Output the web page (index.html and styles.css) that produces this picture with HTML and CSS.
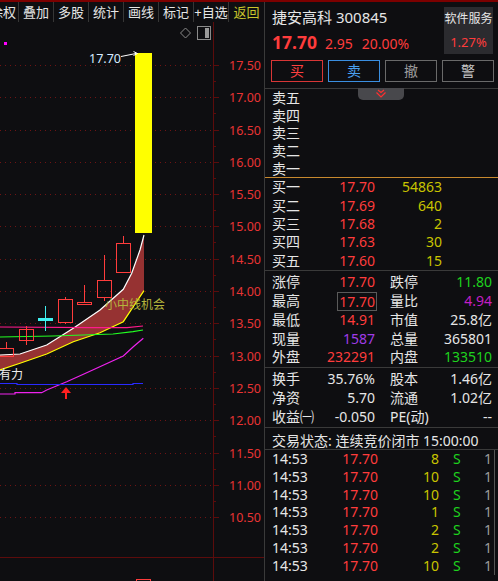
FILE: index.html
```html
<!DOCTYPE html>
<html lang="zh-CN">
<head>
<meta charset="utf-8">
<title>捷安高科 300845</title>
<link rel="stylesheet" href="styles.css">
</head>
<body>
<div class="topline"></div>
<div class="main">
  <div class="left">
    <div class="toolbar">
      <div class="tb first">除权</div>
      <div class="tb">叠加</div>
      <div class="tb">多股</div>
      <div class="tb">统计</div>
      <div class="tb">画线</div>
      <div class="tb">标记</div>
      <div class="tb">+自选</div>
      <div class="tb back">返回</div>
    </div>
    <svg class="chart" viewBox="0 22 264 559" width="264" height="559" xmlns="http://www.w3.org/2000/svg">
      <g class="grid">
        <line x1="0" y1="65.5" x2="213" y2="65.5"/>
        <line x1="0" y1="97.5" x2="213" y2="97.5"/>
        <line x1="0" y1="130.5" x2="213" y2="130.5"/>
        <line x1="0" y1="162.5" x2="213" y2="162.5"/>
        <line x1="0" y1="194.5" x2="213" y2="194.5"/>
        <line x1="0" y1="226.5" x2="213" y2="226.5"/>
        <line x1="0" y1="259.5" x2="213" y2="259.5"/>
        <line x1="0" y1="291.5" x2="213" y2="291.5"/>
        <line x1="0" y1="323.5" x2="213" y2="323.5"/>
        <line x1="0" y1="356.5" x2="213" y2="356.5"/>
        <line x1="0" y1="388.5" x2="213" y2="388.5"/>
        <line x1="0" y1="420.5" x2="213" y2="420.5"/>
        <line x1="0" y1="453.5" x2="213" y2="453.5"/>
        <line x1="0" y1="485.5" x2="213" y2="485.5"/>
        <line x1="0" y1="517.5" x2="213" y2="517.5"/>
      </g>
      <g class="axis">
        <line x1="213.5" y1="22" x2="213.5" y2="581"/>
        <line x1="0" y1="557.5" x2="264" y2="557.5"/>
        <line x1="213" y1="65.5" x2="219" y2="65.5"/>
        <line x1="213" y1="97.5" x2="219" y2="97.5"/>
        <line x1="213" y1="130.5" x2="219" y2="130.5"/>
        <line x1="213" y1="162.5" x2="219" y2="162.5"/>
        <line x1="213" y1="194.5" x2="219" y2="194.5"/>
        <line x1="213" y1="226.5" x2="219" y2="226.5"/>
        <line x1="213" y1="259.5" x2="219" y2="259.5"/>
        <line x1="213" y1="291.5" x2="219" y2="291.5"/>
        <line x1="213" y1="323.5" x2="219" y2="323.5"/>
        <line x1="213" y1="356.5" x2="219" y2="356.5"/>
        <line x1="213" y1="388.5" x2="219" y2="388.5"/>
        <line x1="213" y1="420.5" x2="219" y2="420.5"/>
        <line x1="213" y1="453.5" x2="219" y2="453.5"/>
        <line x1="213" y1="485.5" x2="219" y2="485.5"/>
        <line x1="213" y1="517.5" x2="219" y2="517.5"/>
        <line x1="213" y1="81.5" x2="216" y2="81.5"/>
        <line x1="213" y1="113.5" x2="216" y2="113.5"/>
        <line x1="213" y1="146.5" x2="216" y2="146.5"/>
        <line x1="213" y1="178.5" x2="216" y2="178.5"/>
        <line x1="213" y1="210.5" x2="216" y2="210.5"/>
        <line x1="213" y1="242.5" x2="216" y2="242.5"/>
        <line x1="213" y1="275.5" x2="216" y2="275.5"/>
        <line x1="213" y1="307.5" x2="216" y2="307.5"/>
        <line x1="213" y1="339.5" x2="216" y2="339.5"/>
        <line x1="213" y1="372.5" x2="216" y2="372.5"/>
        <line x1="213" y1="404.5" x2="216" y2="404.5"/>
        <line x1="213" y1="436.5" x2="216" y2="436.5"/>
        <line x1="213" y1="469.5" x2="216" y2="469.5"/>
        <line x1="213" y1="501.5" x2="216" y2="501.5"/>
      </g>
      <g class="ax">
        <text x="229" y="70">17.50</text>
        <text x="229" y="102">17.00</text>
        <text x="229" y="135">16.50</text>
        <text x="229" y="167">16.00</text>
        <text x="229" y="199">15.50</text>
        <text x="229" y="231">15.00</text>
        <text x="229" y="264">14.50</text>
        <text x="229" y="296">14.00</text>
        <text x="229" y="328">13.50</text>
        <text x="229" y="361">13.00</text>
        <text x="229" y="393">12.50</text>
        <text x="229" y="425">12.00</text>
        <text x="229" y="458">11.50</text>
        <text x="229" y="490">11.00</text>
        <text x="229" y="522">10.50</text>
      </g>
      <!-- top icons -->
      <polygon points="185.5,28 190.5,33 185.5,38 180.5,33" fill="none" stroke="#8a8a8a"/>
      <rect x="197.5" y="26.5" width="13" height="13" fill="none" stroke="#8a8a8a"/>
      <rect x="205" y="28" width="4" height="10" fill="#9a9a9a"/>
      <rect x="4" y="42" width="3" height="3" fill="#ff00ff"/>
      <!-- band -->
      <polygon class="band" points="0,355 20,354 46.7,345 73.3,328.3 100,310 123.3,289.3 131.7,273.3 140,250 144,235 144,290.7 133.3,306.7 123.3,321.7 100,332.7 73.3,341.7 46.7,354 20,363.3 0,370"/>
      <polyline class="ln" stroke="#ffffff" points="0,355 20,354 46.7,345 73.3,328.3 100,310 123.3,289.3 131.7,273.3 140,250 144,235"/>
      <polyline class="ln" stroke="#ffff00" points="0,370 20,363.3 46.7,354 73.3,341.7 100,332.7 123.3,321.7 133.3,306.7 144,290.7"/>
      <polyline class="ln" stroke="#ff1a8c" points="0,327 93,327.7 127,327.7 143,326"/>
      <polyline class="ln" stroke="#22ff22" points="0,337 53,336 113,334 133,331.7 143,330"/>
      <polyline class="ln" stroke="#ee22ee" points="0,394 15,394 15,392.7 41.7,392.7 46.7,390 66.7,381.7 86.7,372.7 123.3,356 133.3,346.7 143.3,338.3"/>
      <polyline class="ln" stroke="#2a2aff" points="0,383.5 17,383.5 17,384.5 133,384.5 133,383.5 143,383.5"/>
      <!-- candles -->
      <g class="cdl">
        <line x1="123.5" y1="236" x2="123.5" y2="243"/>
        <rect x="116.5" y="243.5" width="14" height="29"/>
        <line x1="104.5" y1="255" x2="104.5" y2="280"/>
        <line x1="104.5" y1="297" x2="104.5" y2="301"/>
        <rect x="97.5" y="280.5" width="14" height="17"/>
        <line x1="84.5" y1="285" x2="84.5" y2="302"/>
        <rect x="77.5" y="302.5" width="14" height="2"/>
        <line x1="65.5" y1="297" x2="65.5" y2="299"/>
        <line x1="65.5" y1="322" x2="65.5" y2="324"/>
        <rect x="58.5" y="299.5" width="14" height="23"/>
        <line x1="26.5" y1="326" x2="26.5" y2="345"/>
        <rect x="19.5" y="329.5" width="14" height="11"/>
        <line x1="6.5" y1="342" x2="6.5" y2="348"/>
        <rect x="-3.5" y="348.5" width="17" height="8"/>
        <rect x="136.5" y="579.5" width="14" height="6"/>
      </g>
      <line x1="45.5" y1="306" x2="45.5" y2="331" stroke="#40f0f0"/>
      <rect x="38" y="318" width="15" height="3" fill="#40f0f0"/>
      <rect x="135" y="53" width="17" height="180" fill="#ffff00"/>
      <polyline points="121,56.5 136,53.5" fill="none" stroke="#ffffff"/>
      <polyline points="133.5,51.5 137.5,53.5 133.5,55.5" fill="none" stroke="#ffffff"/>
      <text class="lbl" x="89" y="62.5">17.70</text>
      <text class="sig" x="105" y="308.5">小中线机会</text>
      <text class="wt" x="-1" y="378.5">有力</text>
      <polygon points="66,387 61,393 71,393" fill="#ff2020"/>
      <rect x="65" y="393" width="2" height="6" fill="#ff2020"/>
    </svg>
  </div>
  <div class="right">
    <div class="head">
      <div class="info">
        <div class="name">捷安高科 300845</div>
        <div class="quote"><span class="last">17.70</span><span class="chg">2.95</span><span class="pct">20.00%</span></div>
      </div>
      <div class="sector"><div class="sname">软件服务</div><div class="spct">1.27%</div></div>
    </div>
    <div class="btns">
      <div class="btn buy">买</div>
      <div class="btn sell">卖</div>
      <div class="btn cancel">撤</div>
      <div class="btn warn">警</div>
    </div>
    <div class="book asks">
      <div class="handle">
        <svg width="10" height="9" viewBox="0 0 10 9"><polyline points="2,1 5,3.5 8,1" fill="none" stroke="#ff3030" stroke-width="1.2"/><polyline points="0.5,3.5 5,8 9.5,3.5" fill="none" stroke="#ff3030" stroke-width="1.2"/></svg>
      </div>
      <div class="row"><span>卖五</span><span></span><span></span></div>
      <div class="row"><span>卖四</span><span></span><span></span></div>
      <div class="row"><span>卖三</span><span></span><span></span></div>
      <div class="row"><span>卖二</span><span></span><span></span></div>
      <div class="row"><span>卖一</span><span></span><span></span></div>
    </div>
    <div class="book bids">
      <div class="row"><span>买一</span><span class="v red">17.70</span><span class="v vol">54863</span></div>
      <div class="row"><span>买二</span><span class="v red">17.69</span><span class="v vol">640</span></div>
      <div class="row"><span>买三</span><span class="v red">17.68</span><span class="v vol">2</span></div>
      <div class="row"><span>买四</span><span class="v red">17.63</span><span class="v vol">30</span></div>
      <div class="row"><span>买五</span><span class="v red">17.60</span><span class="v vol">15</span></div>
    </div>
    <div class="stats">
      <div class="srow"><span>涨停</span><span class="v red">17.70</span><span class="l2">跌停</span><span class="v grn">11.80</span></div>
      <div class="srow"><span>最高</span><span class="v red"><span class="boxed">17.70</span></span><span class="l2">量比</span><span class="v pur">4.94</span></div>
      <div class="srow"><span>最低</span><span class="v red">14.91</span><span class="l2">市值</span><span class="v">25.8亿</span></div>
      <div class="srow"><span>现量</span><span class="v vio">1587</span><span class="l2">总量</span><span class="v">365801</span></div>
      <div class="srow"><span>外盘</span><span class="v red">232291</span><span class="l2">内盘</span><span class="v grn">133510</span></div>
    </div>
    <div class="stats2">
      <div class="srow"><span>换手</span><span class="v">35.76%</span><span class="l2">股本</span><span class="v">1.46亿</span></div>
      <div class="srow"><span>净资</span><span class="v">5.70</span><span class="l2">流通</span><span class="v">1.02亿</span></div>
      <div class="srow"><span>收益㈠</span><span class="v">-0.050</span><span class="l2">PE(动)</span><span class="v">--</span></div>
    </div>
    <div class="status">交易状态: 连续竞价闭市 15:00:00</div>
    <div class="ticks">
      <div class="trow"><span>14:53</span><span class="v red">17.70</span><span class="v vol">8</span><span></span><span class="grn">S</span><span class="v gray">1</span></div>
      <div class="trow"><span>14:53</span><span class="v red">17.70</span><span class="v vol">10</span><span></span><span class="grn">S</span><span class="v gray">1</span></div>
      <div class="trow"><span>14:53</span><span class="v red">17.70</span><span class="v vol">10</span><span></span><span class="grn">S</span><span class="v gray">1</span></div>
      <div class="trow"><span>14:53</span><span class="v red">17.70</span><span class="v vol">1</span><span></span><span class="grn">S</span><span class="v gray">1</span></div>
      <div class="trow"><span>14:53</span><span class="v red">17.70</span><span class="v vol">2</span><span></span><span class="grn">S</span><span class="v gray">1</span></div>
      <div class="trow"><span>14:53</span><span class="v red">17.70</span><span class="v vol">2</span><span></span><span class="grn">S</span><span class="v gray">1</span></div>
      <div class="trow"><span>14:53</span><span class="v red">17.70</span><span class="v vol">10</span><span></span><span class="grn">S</span><span class="v gray">1</span></div>
    </div>
  </div>
</div>
</body>
</html>
```

FILE: styles.css
```css
* { box-sizing: border-box; margin: 0; padding: 0; }
html, body { width: 498px; height: 581px; overflow: hidden; }
body {
  background: #0e0e11;
  color: #e6e6e6;
  font-family: "Noto Sans", "Noto Sans CJK SC", sans-serif;
  font-size: 14px;
}
.topline { height: 2px; background: #7c0000; }
.main { display: flex; height: 579px; }

/* left: toolbar + chart */
.left { width: 264px; flex: none; display: flex; flex-direction: column; overflow: hidden; }
.toolbar { height: 20px; flex: none; display: flex; margin-left: -16px; }
.tb {
  flex: none; width: 35px; border-right: 1px solid #363636;
  text-align: center; font-size: 13px; line-height: 20px; white-space: nowrap; color: #e6e6e6;
}
.tb.first { text-align: right; padding-right: 2px; }
.tb.back { color: #c9c42c; border-right: 0; }
.chart { display: block; flex: none; }
.grid line { stroke: #6e1414; stroke-dasharray: 1 4; }
.axis line { stroke: #5c0c0c; }
.ax { font-family: "Noto Sans", sans-serif; font-size: 12.5px; fill: #e83434; }
.band { fill: #963232; }
.ln { fill: none; stroke-width: 1.2; }
.cdl line, .cdl rect { stroke: #ff3c3c; fill: none; }
.lbl { font-family: "Noto Sans", sans-serif; font-size: 12.5px; fill: #d6eaff; }
.sig { font-family: "Noto Sans CJK SC", sans-serif; font-size: 12px; fill: #b4b43c; }
.wt { font-family: "Noto Sans CJK SC", sans-serif; font-size: 12px; fill: #eeeeee; }

/* right panel */
.right { flex: 1; border-left: 1px solid #3a3a3a; display: flex; flex-direction: column; }
.head { height: 58px; flex: none; display: flex; justify-content: space-between; padding: 5px 5px 0 7px; }
.name { font-size: 15px; line-height: 20px; white-space: nowrap; }
.quote { margin-top: 4px; line-height: 22px; color: #ff3c3c; display: flex; align-items: baseline; white-space: nowrap; }
.last { font-size: 17.5px; font-weight: bold; margin-right: 8px; }
.chg { font-size: 14px; margin-right: 9px; }
.pct { font-size: 14px; }
.sector { width: 49px; height: 47px; background: #2b2b2f; text-align: center; padding-top: 3px; }
.sname { font-size: 12px; line-height: 17px; white-space: nowrap; }
.spct { font-size: 13px; line-height: 17px; margin-top: 7px; color: #ff3c3c; }

.btns { display: flex; gap: 5px; padding-left: 6px; height: 22px; flex: none; }
.btn { width: 52px; height: 22px; border: 1px solid; text-align: center; line-height: 20px; font-size: 14px; }
.buy { border-color: #d83636; color: #ff4040; }
.sell { border-color: #3a8ee0; color: #4aa0f0; }
.cancel { border-color: #6a6a6a; color: #9c9c9c; }
.warn { border-color: #6a6a6a; color: #c8c8c8; }

.book { flex: none; }
.asks { margin-top: 6px; border-top: 1px solid #3a3a3a; border-bottom: 1px solid #c8892e; position: relative; }
.handle {
  position: absolute; left: 93px; top: -1px; width: 46px; height: 12px;
  background: #48484c; border-radius: 0 0 5px 5px;
  display: flex; justify-content: center; align-items: flex-start; padding-top: 1px;
}
.handle svg { display: block; }
.row { display: grid; grid-template-columns: 50px 53px 67px; padding-left: 7px; white-space: nowrap; }
.asks .row { height: 17.7px; line-height: 17.7px; }
.bids { border-bottom: 1px solid #3a3a3a; }
.bids .row { height: 18.3px; line-height: 18.3px; }
.v { text-align: right; }

.stats { flex: none; padding-top: 2.3px; border-bottom: 1px solid #3a3a3a; }
.stats2 { flex: none; padding-top: 0.5px; border-bottom: 1px solid #3a3a3a; }
.srow { display: grid; grid-template-columns: 50px 53px 67px 50px; padding-left: 7px; white-space: nowrap; }
.stats .srow { height: 18.8px; line-height: 18.8px; }
.stats2 .srow { height: 19.3px; line-height: 19.3px; }
.l2 { padding-left: 15px; }
.boxed { display: inline-block; border: 1px solid #5a5a5a; padding: 0 1px; margin-right: -2px; line-height: 17px; }

.status { flex: none; height: 22.7px; padding: 3px 0 0 7px; line-height: 19px; border-bottom: 1px solid #3a3a3a; white-space: nowrap; }
.ticks { flex: none; height: 125px; margin-right: 3px; border-right: 1px solid #555555; }
.trow { display: grid; grid-template-columns: 50px 56px 61px 14px 20px 19px; padding-left: 7px; height: 17.72px; line-height: 17.72px; }

.red { color: #ff3c3c; }
.grn { color: #1ed21e; }
.vol { color: #c8c400; }
.pur { color: #c41ec4; }
.vio { color: #a03ce6; }
.gray { color: #9c9c9c; }
```
